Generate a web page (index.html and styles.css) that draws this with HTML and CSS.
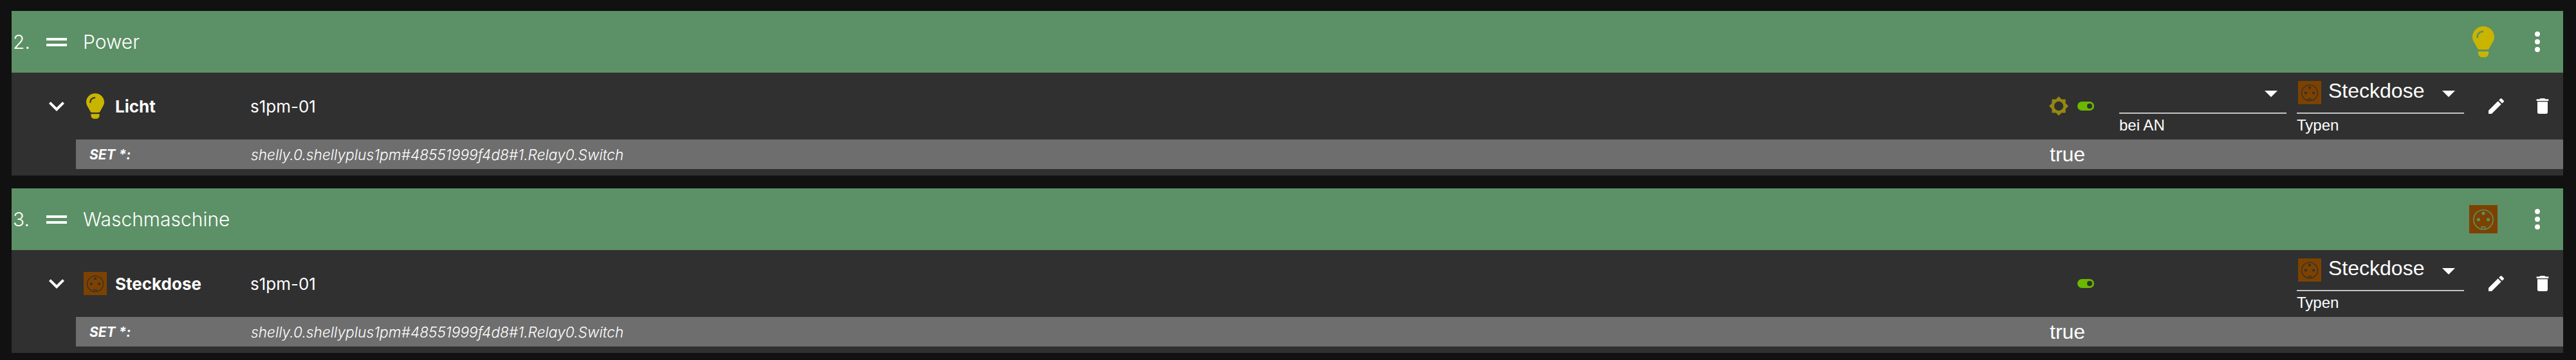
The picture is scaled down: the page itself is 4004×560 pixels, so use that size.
FILE: index.html
```html
<!DOCTYPE html>
<html lang="en">
<head>
    <meta charset="UTF-8">
    <title>Power</title>
    <link rel="stylesheet" href="styles.css">
</head>
<body>
    <svg class="defs" width="0" height="0">
        <symbol id="bulb" viewBox="0 0 34 48">
            <path fill="#c9b400" d="M17 0C7.6 0 0 7.4 0 16.5C0 20 1 22.5 3 25.5L8 34.5Q9 36 11 36H23Q25 36 26 34.5L31 25.5C33 22.5 34 20 34 16.5C34 7.4 26.4 0 17 0Z"/>
            <path fill="#c9b400" d="M9 39H25V42C25 45 22 48 20 48H14C12 48 9 45 9 42Z"/>
            <path fill="none" stroke="currentColor" stroke-width="2.6" d="M7.5 18C7.5 12 11 8 17 8"/>
        </symbol>
        <symbol id="socket" viewBox="0 0 36 36">
            <rect width="36" height="36" fill="#7d4200"/>
            <circle cx="18" cy="18.5" r="12.4" fill="none" stroke="currentColor" stroke-width="1.3"/>
            <circle cx="18" cy="10.5" r="2.1" fill="currentColor"/>
            <circle cx="11.8" cy="18.5" r="2.1" fill="currentColor"/>
            <circle cx="24.2" cy="18.5" r="2.1" fill="currentColor"/>
            <path fill="none" stroke="currentColor" stroke-width="1.3" d="M16 30V27.6H20V30"/>
        </symbol>
        <symbol id="sun" viewBox="0.69 0.69 22.62 22.62">
            <path fill="#948713" fill-rule="evenodd" d="M20,15.31L23.31,12L20,8.69V4H15.31L12,0.69L8.69,4H4V8.69L0.69,12L4,15.31V20H8.69L12,23.31L15.31,20H20V15.31ZM12,6.6A5.4,5.4 0 1,1 12,17.4A5.4,5.4 0 1,1 12,6.6Z"/>
        </symbol>
        <symbol id="chevron" viewBox="0 0 24 24">
            <path fill="#fff" d="M7.41,8.58L12,13.17L16.59,8.58L18,10L12,16L6,10L7.41,8.58Z"/>
        </symbol>
        <symbol id="dots" viewBox="0 0 24 24">
            <path fill="#fff" d="M12,16A2,2 0 0,1 14,18A2,2 0 0,1 12,20A2,2 0 0,1 10,18A2,2 0 0,1 12,16M12,10A2,2 0 0,1 14,12A2,2 0 0,1 12,14A2,2 0 0,1 10,12A2,2 0 0,1 12,10M12,4A2,2 0 0,1 14,6A2,2 0 0,1 12,8A2,2 0 0,1 10,6A2,2 0 0,1 12,4Z"/>
        </symbol>
        <symbol id="pencil" viewBox="0 0 24 24">
            <path fill="#fff" d="M20.71,7.04C21.1,6.65 21.1,6 20.71,5.63L18.37,3.29C18,2.9 17.35,2.9 16.96,3.29L15.12,5.12L18.87,8.87M3,17.25V21H6.75L17.81,9.93L14.06,6.18L3,17.25Z"/>
        </symbol>
        <symbol id="trash" viewBox="0 0 24 24">
            <path fill="#fff" d="M19,4H15.5L14.5,3H9.5L8.5,4H5V6H19M6,19A2,2 0 0,0 8,21H16A2,2 0 0,0 18,19V7H6V19Z"/>
        </symbol>
    </svg>

    <div class="panel">
        <div class="panel-head">
            <span class="num">2.</span>
            <span class="drag"></span>
            <span class="title">Power</span>
            <span class="head-icon"><svg class="bulb-big"><use href="#bulb"/></svg></span>
            <svg class="dots"><use href="#dots"/></svg>
        </div>
        <div class="row">
            <svg class="chevron"><use href="#chevron"/></svg>
            <span class="row-icon"><svg class="bulb-small"><use href="#bulb"/></svg></span>
            <span class="name">Licht</span>
            <span class="device">s1pm-01</span>
            <svg class="sun"><use href="#sun"/></svg>
            <span class="toggle"></span>
            <div class="select">
                <div class="select-value"><span class="arrow"></span></div>
                <div class="select-label">bei AN</div>
            </div>
            <div class="select">
                <div class="select-value">
                    <svg class="socket"><use href="#socket"/></svg>
                    <span class="select-text">Steckdose</span>
                    <span class="arrow"></span>
                </div>
                <div class="select-label">Typen</div>
            </div>
            <svg class="action pencil"><use href="#pencil"/></svg>
            <svg class="action trash"><use href="#trash"/></svg>
        </div>
        <div class="set-row">
            <span class="set-label">SET *:</span>
            <span class="set-path">shelly.0.shellyplus1pm#48551999f4d8#1.Relay0.Switch</span>
            <span class="set-value">true</span>
        </div>
    </div>

    <div class="panel">
        <div class="panel-head">
            <span class="num">3.</span>
            <span class="drag"></span>
            <span class="title">Waschmaschine</span>
            <span class="head-icon"><svg class="socket-big"><use href="#socket"/></svg></span>
            <svg class="dots"><use href="#dots"/></svg>
        </div>
        <div class="row">
            <svg class="chevron"><use href="#chevron"/></svg>
            <span class="row-icon"><svg class="socket"><use href="#socket"/></svg></span>
            <span class="name">Steckdose</span>
            <span class="device">s1pm-01</span>
            <span class="sun"></span>
            <span class="toggle"></span>
            <div class="select select-empty"></div>
            <div class="select">
                <div class="select-value">
                    <svg class="socket"><use href="#socket"/></svg>
                    <span class="select-text">Steckdose</span>
                    <span class="arrow"></span>
                </div>
                <div class="select-label">Typen</div>
            </div>
            <svg class="action pencil"><use href="#pencil"/></svg>
            <svg class="action trash"><use href="#trash"/></svg>
        </div>
        <div class="set-row">
            <span class="set-label">SET *:</span>
            <span class="set-path">shelly.0.shellyplus1pm#48551999f4d8#1.Relay0.Switch</span>
            <span class="set-value">true</span>
        </div>
    </div>
</body>
</html>
```

FILE: styles.css
```css
html {
    height: 100%;
    overflow: hidden;
}

body {
    display: flex;
    flex-direction: column;
    gap: 20px;
    margin: 0;
    padding: 17px 20px 0 18px;
    height: 100%;
    box-sizing: border-box;
    overflow: hidden;
    background-color: #111111;
    font-family: Inter, sans-serif;
    color: #ffffff;
}

.defs {
    position: absolute;
}

.panel {
    background-color: #303030;
    padding-bottom: 10px;
}

.panel-head {
    display: flex;
    align-items: center;
    height: 96px;
    padding: 0 16px 0 2px;
    background-color: #5c9066;
    color: #5c9066;
}

.num {
    width: 52px;
    font-size: 30px;
    font-weight: 300;
    color: #ffffff;
}

.drag {
    width: 32px;
    height: 5px;
    box-sizing: content-box;
    border-top: 4px solid #ffffff;
    border-bottom: 4px solid #ffffff;
}

.title {
    margin-left: 25px;
    font-size: 30px;
    font-weight: 300;
    color: #ffffff;
}

.head-icon {
    display: flex;
    justify-content: center;
    width: 44px;
    margin-left: auto;
}

.bulb-big {
    width: 34px;
    height: 48px;
}

.socket-big {
    width: 44px;
    height: 44px;
}

.dots {
    width: 48px;
    height: 48px;
    margin-left: 38px;
}

.row {
    display: flex;
    align-items: center;
    height: 104px;
    padding: 0 16px 0 46px;
    color: #303030;
}

.chevron {
    width: 48px;
    height: 48px;
}

.row-icon {
    display: flex;
    justify-content: center;
    width: 36px;
    margin-left: 18px;
}

.bulb-small {
    width: 28px;
    height: 40px;
}

.socket {
    flex: none;
    width: 36px;
    height: 36px;
}

.name {
    width: 210px;
    margin-left: 13px;
    font-size: 26px;
    font-weight: 700;
    color: #ffffff;
}

.device {
    flex: 1;
    font-size: 26px;
    color: #ffffff;
}

.sun {
    width: 30px;
    height: 30px;
}

.toggle {
    position: relative;
    width: 26px;
    height: 14px;
    margin-left: 14px;
    border-radius: 7px;
    background-color: #6bb800;
}

.toggle:after {
    content: "";
    position: absolute;
    top: 3px;
    right: 3px;
    width: 8px;
    height: 8px;
    border-radius: 50%;
    background-color: #303030;
}

.select {
    align-self: flex-start;
    width: 260px;
    margin: 13px 0 0 16px;
    font-family: "Liberation Sans", Arial, sans-serif;
}

.toggle + .select {
    margin-left: 39px;
}

.select-value {
    display: flex;
    align-items: flex-start;
    box-sizing: border-box;
    height: 51px;
    padding-left: 2px;
    border-bottom: 2px solid #c4c4c4;
}

.select-empty {
    visibility: hidden;
}

.select-text {
    margin-left: 11px;
    font-size: 32px;
    line-height: 30px;
    color: #ffffff;
}

.arrow {
    width: 0;
    height: 0;
    margin: 15px 14px 0 auto;
    border-left: 10px solid transparent;
    border-right: 10px solid transparent;
    border-top: 10px solid #ffffff;
}

.select-label {
    margin-top: 4px;
    font-size: 24px;
    line-height: 28px;
    color: #ffffff;
}

.action {
    width: 32px;
    height: 32px;
}

.pencil {
    margin-left: 34px;
}

.trash {
    margin-left: 40px;
}

.set-row {
    display: flex;
    align-items: center;
    height: 46px;
    margin-left: 100px;
    padding-left: 21px;
    background-color: #6e6e6e;
}

.set-label {
    width: 251px;
    font-size: 21px;
    font-weight: 700;
    font-style: italic;
}

.set-path {
    flex: 1;
    font-size: 22.7px;
    font-style: italic;
    font-weight: 300;
}

.set-value {
    width: 798px;
    font-family: "Liberation Sans", Arial, sans-serif;
    font-size: 32px;
}
```
